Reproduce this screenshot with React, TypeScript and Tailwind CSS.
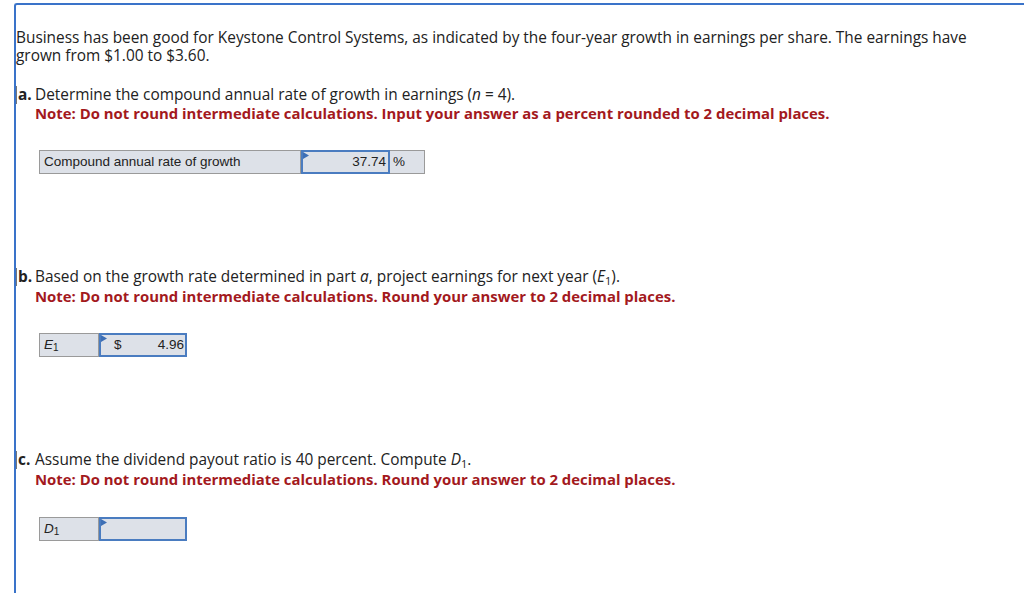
const font = { fontFamily: "'Open Sans', sans-serif" };
const cellFont = { fontFamily: "'Liberation Sans', Arial, sans-serif" };

function Flag() {
  return (
    <svg className="absolute left-0 top-0" width="6" height="8" viewBox="0 0 6 8">
      <path d="M0 0 L6 3.5 L0 7 Z" fill="#3e6fb5" />
    </svg>
  );
}

function PartHead({ letter, children }: { letter: string; children: React.ReactNode }) {
  return (
    <div className="flex border-l border-[#777] pl-[1px]">
      <span className="w-[17px] font-bold">{letter}</span>
      <span>{children}</span>
    </div>
  );
}

function Note({ children, className = "" }: { children: React.ReactNode; className?: string }) {
  return <div className={`pl-[19px] font-bold text-[14.9px] text-[#a3191d] ${className}`}>{children}</div>;
}

function Sub({ children }: { children: React.ReactNode }) {
  return <sub className="text-[11px] leading-none">{children}</sub>;
}

export default function App() {
  return (
    <div className="bg-white w-[1024px] h-[593px] overflow-hidden pt-[3px] pl-[14px]">
      <div
        className="h-[620px] border-t-2 border-l-2 border-[#3a73c9] rounded-tl-[3px] text-[15.4px] leading-[18px] text-[#222]"
        style={font}
      >
        <p className="pt-[24px] pr-[30px]">
          Business has been good for Keystone Control Systems, as indicated by the four-year growth in earnings per share. The earnings have grown from $1.00 to $3.60.
        </p>

        <div className="mt-[21px]">
          <PartHead letter="a.">
            Determine the compound annual rate of growth in earnings (<i>n</i> = 4).
          </PartHead>
          <Note>Note: Do not round intermediate calculations. Input your answer as a percent rounded to 2 decimal places.</Note>
        </div>

        <div className="mt-[28px] ml-[23px] flex h-[24px] text-[13.5px]" style={cellFont}>
          <div className="w-[262px] bg-[#dde1e8] border border-[#9a9a9a] flex items-center pl-[4px]">
            Compound annual rate of growth
          </div>
          <div className="relative w-[89px] bg-[#dde1e8] border-2 border-[#4a7cc0] flex items-center justify-end pr-[2px]">
            <Flag />
            37.74
          </div>
          <div className="w-[35px] bg-[#dde1e8] border border-[#9a9a9a] border-l-0 flex items-center pl-[3px]">%</div>
        </div>

        <div className="mt-[94px]">
          <PartHead letter="b.">
            Based on the growth rate determined in part <i>a</i>, project earnings for next year (<i>E</i><Sub>1</Sub>).
          </PartHead>
          <Note className="mt-[1px]">Note: Do not round intermediate calculations. Round your answer to 2 decimal places.</Note>
        </div>

        <div className="mt-[28px] ml-[23px] flex h-[24px] text-[13.5px]" style={cellFont}>
          <div className="w-[60px] bg-[#dde1e8] border border-[#9a9a9a] flex items-center pl-[4px]">
            <i>E</i><sub className="text-[10px] leading-none">1</sub>
          </div>
          <div className="relative w-[88px] bg-[#dde1e8] border-2 border-[#4a7cc0] flex items-center justify-between pl-[13px] pr-[1px]">
            <Flag />
            <span>$</span>
            <span>4.96</span>
          </div>
        </div>

        <div className="mt-[94px]">
          <PartHead letter="c.">
            Assume the dividend payout ratio is 40 percent. Compute <i>D</i><Sub>1</Sub>.
          </PartHead>
          <Note className="mt-[1px]">Note: Do not round intermediate calculations. Round your answer to 2 decimal places.</Note>
        </div>

        <div className="mt-[29px] ml-[23px] flex h-[24px] text-[13.5px]" style={cellFont}>
          <div className="w-[60px] bg-[#dde1e8] border border-[#9a9a9a] flex items-center pl-[4px]">
            <i>D</i><sub className="text-[10px] leading-none">1</sub>
          </div>
          <div className="relative w-[88px] bg-[#dde1e8] border-2 border-[#4a7cc0]">
            <Flag />
          </div>
        </div>
      </div>
    </div>
  );
}
